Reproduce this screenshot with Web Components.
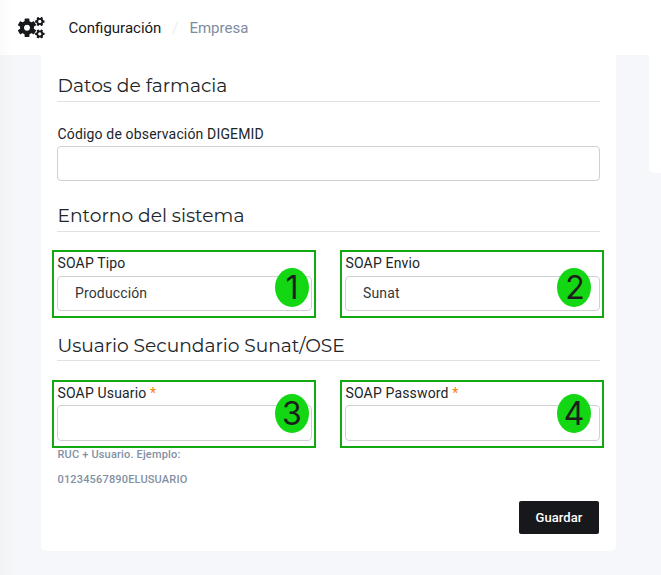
<!DOCTYPE html>
<html lang="es">
<head>
<meta charset="utf-8">
<title>Configuración / Empresa</title>
<style>
html,body{margin:0;height:100%;overflow:hidden}
body{font-family:Roboto,"Liberation Sans",sans-serif;color:#212529;background:#f6f7fa}
</style>
</head>
<body>
<app-page>
  <page-header slot="header" section="Configuración" page="Empresa"></page-header>
  <form-card>
    <form-section heading="Datos de farmacia" style="--h:47px">
      <form-field label="Código de observación DIGEMID" style="--top:22px;--control:35px"></form-field>
    </form-section>
    <form-section heading="Entorno del sistema" style="--h:51px">
      <form-field label="SOAP Tipo" value="Producción" mark="1" style="--control:35px;--badge:16px;--br:7px"></form-field>
      <form-field label="SOAP Envio" value="Sunat" mark="2" style="--control:35px;--badge:16px;--br:13px;--nudge:2px"></form-field>
    </form-section>
    <form-section heading="Usuario Secundario Sunat/OSE" style="--h:43px;--pb:2px;--ls:-.03px">
      <form-field label="SOAP Usuario" required mark="3" style="--top:19px;--control:36px;--badge:12px;--br:7px">RUC + Usuario. Ejemplo: 01234567890ELUSUARIO</form-field>
      <form-field label="SOAP Password" required mark="4" style="--top:19px;--control:36px;--badge:12px;--br:13px"></form-field>
    </form-section>
    <save-button slot="actions">Guardar</save-button>
  </form-card>
</app-page>
<script>
const define = (name, render) => customElements.define(name, class extends HTMLElement {
  connectedCallback() {
    if (this.shadowRoot) return;
    this.attachShadow({mode: 'open'}).innerHTML = '<style>*{box-sizing:border-box}</style>' + render(this);
  }
});
const gear = (cx, cy, r, body, hole, teeth, w, turn) => {
  let d = '';
  for (let i = 0; i < teeth; i++)
    d += `<rect x="${cx - w / 2}" y="${cy - r}" width="${w}" height="${r - hole - .3}" rx=".5" transform="rotate(${turn + i * 360 / teeth} ${cx} ${cy})"/>`;
  return d + `<circle cx="${cx}" cy="${cy}" r="${(body + hole) / 2}" fill="none" stroke="#17181b" stroke-width="${body - hole}"/>`;
};

define('app-page', () => `<style>
:host{display:flex;flex-direction:column;height:575px;background:linear-gradient(90deg,#f2f3f5 0,#f6f7fa 16px)}
main{flex:1;display:flex;justify-content:space-between;align-items:flex-start;padding-left:41px}
aside{width:12px;height:118px;background:#fff;border-bottom-left-radius:5px}
</style><slot name="header"></slot><main><slot></slot><aside></aside></main>`);

define('page-header', e => `<style>
:host{display:flex;box-sizing:border-box;align-items:center;height:55px;padding-left:18px;background:linear-gradient(90deg,#fafafa,#fff 12px);font-size:15px;line-height:20px;color:#17181b}
svg{width:28px;height:24px;margin-right:22.5px;fill:#17181b}
i{width:28px;text-align:center;color:#eceef0;font-style:normal}
span:last-child{color:#7e8ba0}
</style><svg viewBox="0 0 28 24">${gear(9, 11.7, 9.3, 7, 3, 6, 4.8, 0)}${gear(21.8, 5.5, 4.7, 3.5, 1.7, 6, 2.3, 30)}${gear(21.8, 17.9, 4.7, 3.5, 1.7, 6, 2.3, 30)}</svg>
<span>${e.getAttribute('section')}</span><i>/</i><span>${e.getAttribute('page')}</span>`);

define('form-card', () => `<style>
:host{display:flex;flex-direction:column;box-sizing:border-box;width:575px;height:496px;padding:0 16px;background:#fff;border-radius:0 0 5px 5px}
footer{display:flex;justify-content:flex-end;padding:9px 1px 0 0}
</style><slot></slot><footer><slot name="actions"></slot></footer>`);

define('form-section', e => `<style>
:host{display:block}
h2{display:flex;align-items:flex-end;height:var(--h);margin:0;padding:0 0 var(--pb,3px) .5px;border-bottom:1px solid #dee2e6;font:400 18.67px/24px Montserrat,Lato,sans-serif;letter-spacing:var(--ls,0);color:#212529;white-space:nowrap}
div{display:grid;grid-auto-flow:column;grid-auto-columns:minmax(0,1fr);gap:33px;align-items:start}
</style><h2>${e.getAttribute('heading')}</h2><div><slot></slot></div>`);

define('form-field', e => {
  const mark = e.getAttribute('mark');
  const text = e.textContent.trim().split(': ');
  return `<style>
:host{display:block;padding-top:var(--top,18px)}
section{position:relative}
.marked{margin:0 -4px 0 -5px;padding:3px 2px 5px 3px;border:2px solid #12a812}
label{display:block;height:22px;padding-left:.5px;font-size:14px;line-height:21px;letter-spacing:.16px;color:#212529;white-space:nowrap}
.marked label{height:calc(56px - var(--control))}
.marked label{line-height:17px}
em{color:#fd7e14;font-style:normal}
.control{height:var(--control);border:1px solid #ced0d2;border-radius:4px;padding-left:17px;font-size:14px;line-height:33px;letter-spacing:.14px;color:#33373b}
b{position:absolute;top:var(--badge);right:calc(var(--br) - 2px);display:flex;align-items:center;justify-content:center;width:34px;height:39px;padding-left:var(--nudge,0);border-radius:50%;background:#14d714;font:400 32px/39px Inter,sans-serif;color:#1d1d1b}
p{margin:0;padding-left:.5px;font-size:11px;font-weight:500;line-height:25px;letter-spacing:.17px;color:#8390a3;height:25px}
p:first-of-type{margin-top:-6px}
</style><section class="${mark ? 'marked' : ''}"><label>${e.getAttribute('label')}${e.hasAttribute('required') ? ' <em>*</em>' : ''}</label><div class="control">${e.getAttribute('value') || ''}</div>${mark ? `<b>${mark}</b>` : ''}</section>${text.length > 1 ? `<p>${text[0]}:</p><p>${text[1]}</p>` : ''}`;
});

define('save-button', () => `<style>
:host{display:block}
button{display:block;width:80px;height:33px;padding:0;border:0;border-radius:2px;background:#17181b;color:#fff;font:500 13px/33px Roboto,sans-serif;letter-spacing:.05px}
</style><button><slot></slot></button>`);
</script>
</body>
</html>
